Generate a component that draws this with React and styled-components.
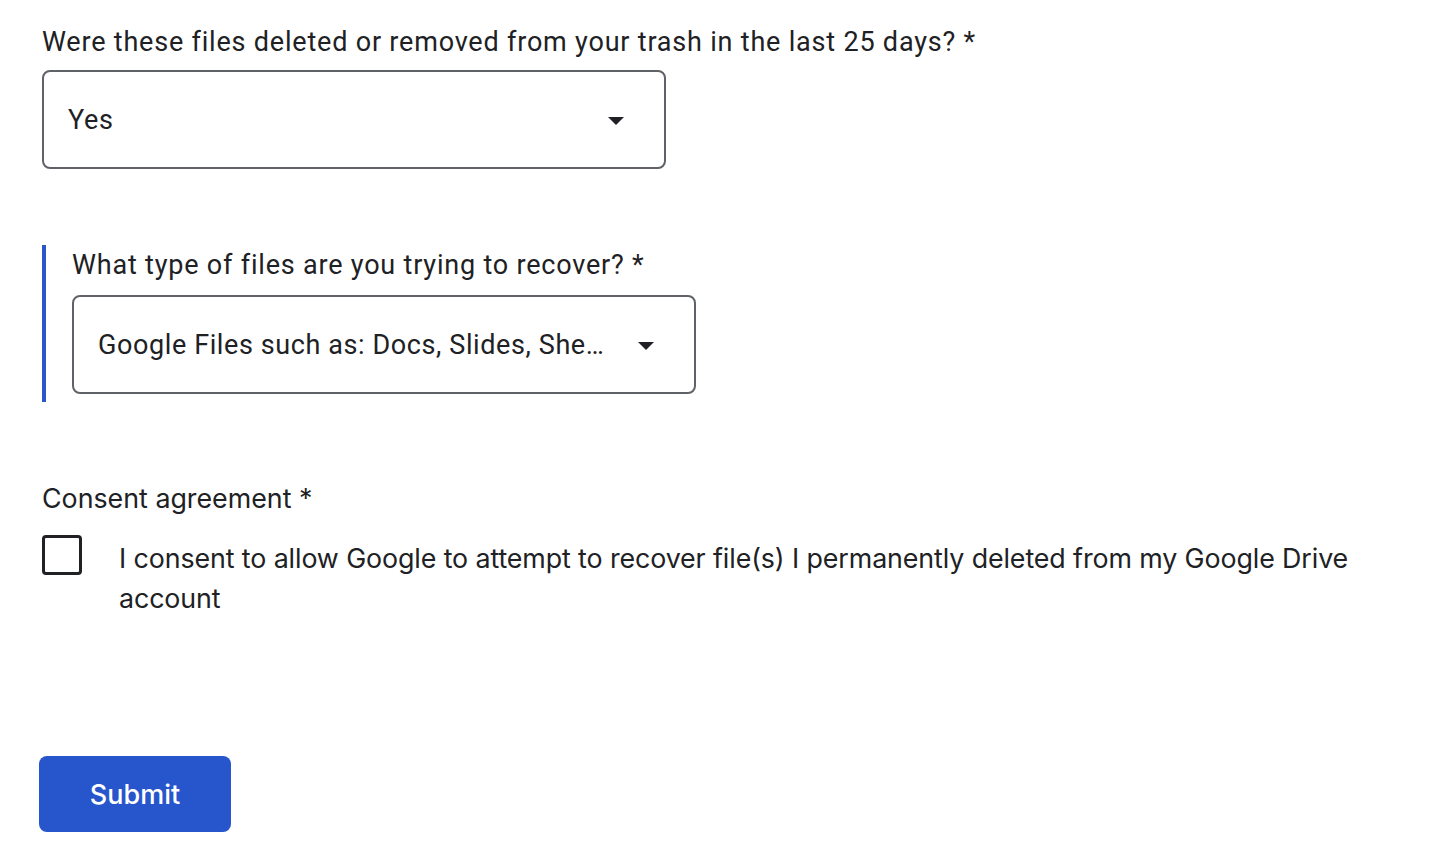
import styled, { createGlobalStyle } from "styled-components";

const GlobalStyle = createGlobalStyle`
  html, body {
    margin: 0;
    padding: 0;
    background: #fff;
  }
  body {
    font-family: Roboto, "Liberation Sans", Arial, sans-serif;
    color: #202124;
  }
`;

function Caret() {
  return (
    <svg width="16" height="8" viewBox="0 0 16 8">
      <path d="M0 0 L16 0 L8 8 Z" fill="#202124" />
    </svg>
  );
}

function Dropdown({ value }) {
  return (
    <SelectBox>
      <SelectValue>{value}</SelectValue>
      <CaretWrap>
        <Caret />
      </CaretWrap>
    </SelectBox>
  );
}

export default function App() {
  return (
    <>
      <GlobalStyle />
      <Page>
        <Question>
          <Label>Were these files deleted or removed from your trash in the last 25 days? *</Label>
          <Dropdown value="Yes" />
        </Question>

        <Question $active>
          <Label>What type of files are you trying to recover? *</Label>
          <Dropdown value="Google Files such as: Docs, Slides, Sheets, Forms, Sites" />
        </Question>

        <Consent>
          <ConsentLabel>Consent agreement *</ConsentLabel>
          <CheckRow>
            <Checkbox />
            <CheckText>
              I consent to allow Google to attempt to recover file(s) I permanently deleted from my
              Google Drive account
            </CheckText>
          </CheckRow>
        </Consent>

        <SubmitButton>Submit</SubmitButton>
      </Page>
    </>
  );
}

const Page = styled.div`
  padding: 24px 42px 0 42px;
  display: flex;
  flex-direction: column;
  align-items: flex-start;
`;

const Question = styled.div`
  display: flex;
  flex-direction: column;
  gap: ${(p) => (p.$active ? "12px" : "10px")};
  margin-bottom: ${(p) => (p.$active ? "78px" : "76px")};
  ${(p) =>
    p.$active &&
    `
    border-left: 4px solid #2a56c6;
    padding-left: 26px;
    padding-top: 2px;
    padding-bottom: 8px;
  `}
`;

const Label = styled.div`
  font-size: 27px;
  line-height: 36px;
  letter-spacing: 0.8px;
  color: #202124;
`;

const SelectBox = styled.div`
  box-sizing: border-box;
  width: 624px;
  height: 99px;
  border: 2px solid #5f6368;
  border-radius: 8px;
  display: flex;
  align-items: center;
  padding: 0 40px 0 24px;
  gap: 28px;
`;

const SelectValue = styled.div`
  flex: 1;
  min-width: 0;
  font-size: 27px;
  letter-spacing: 0.6px;
  color: #202124;
  white-space: nowrap;
  overflow: hidden;
  text-overflow: ellipsis;
`;

const CaretWrap = styled.div`
  display: flex;
  align-items: center;
  margin-top: 2px;
`;

const Consent = styled.div`
  display: flex;
  flex-direction: column;
  gap: 18px;
  margin-bottom: 138px;
`;

const ConsentLabel = styled.div`
  font-family: Inter, Roboto, "Liberation Sans", sans-serif;
  font-size: 26.8px;
  line-height: 36px;
`;

const CheckRow = styled.div`
  display: flex;
  align-items: flex-start;
  gap: 37px;
`;

const Checkbox = styled.div`
  box-sizing: border-box;
  flex: none;
  width: 40px;
  height: 40px;
  margin-top: 1px;
  border: 3.5px solid #202124;
  border-radius: 4px;
`;

const CheckText = styled.div`
  font-family: Inter, Roboto, "Liberation Sans", sans-serif;
  font-size: 26.8px;
  letter-spacing: -0.1px;
  line-height: 40px;
  margin-top: 4px;
  max-width: 1270px;
`;

const SubmitButton = styled.button`
  margin-left: -3px;
  width: 192px;
  height: 76px;
  border: none;
  border-radius: 8px;
  background: #2756cc;
  color: #fff;
  font-family: Inter, Roboto, "Liberation Sans", sans-serif;
  font-size: 27px;
  font-weight: 500;
  cursor: pointer;
`;
